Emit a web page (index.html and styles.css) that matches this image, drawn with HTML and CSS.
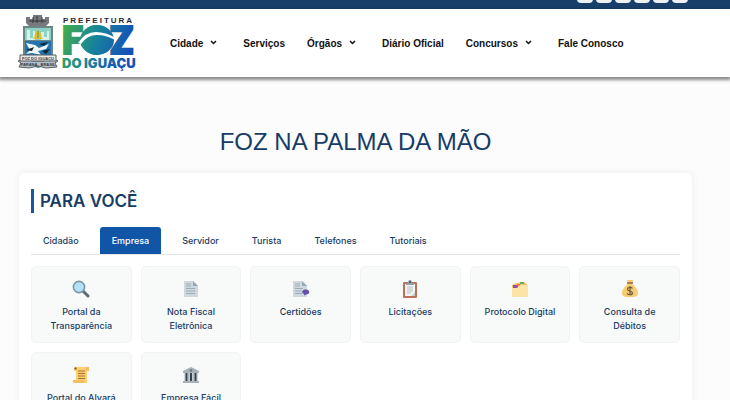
FILE: index.html
```
<!DOCTYPE html>
<html lang="pt-BR">
<head>
  <meta charset="UTF-8" />
  <meta name="viewport" content="width=device-width, initial-scale=1.0" />
  <title>Prefeitura de Foz do Iguaçu</title>
  <link rel="stylesheet" href="styles.css">
</head>
<body>
  <div class="topbar">
    <a href="#" aria-label="Facebook"></a>
    <a href="#" aria-label="Instagram"></a>
    <a href="#" aria-label="YouTube"></a>
    <a href="#" aria-label="Twitter"></a>
    <a href="#" aria-label="Flickr"></a>
    <a href="#" aria-label="WhatsApp"></a>
  </div>

  <header class="header">
    <a class="logo" href="#" aria-label="Prefeitura de Foz do Iguaçu">
      <svg width="120" height="58" viewBox="0 0 120 58">
        <defs>
          <linearGradient id="marca" gradientUnits="userSpaceOnUse" x1="46" y1="12" x2="112" y2="36">
            <stop offset="0" stop-color="#45ad4b" />
            <stop offset="0.5" stop-color="#17849b" />
            <stop offset="1" stop-color="#1550b8" />
          </linearGradient>
        </defs>
        <!-- Brasão -->
        <path d="M9 9V3h4v2h3V1h9v4h3V3h4v6l-3 3H12z" fill="#77797c" />
        <path d="M12 7h17M16 3v6M20 2v7M25 3v6" stroke="#34383c" stroke-width="1" />
        <path d="M6 12h30v28q0 9-15 14Q6 49 6 40z" fill="#6e8586" />
        <path d="M8 14h26v12H8z" fill="#8cd3c4" />
        <path d="M10 26V16h3v8h3v-7h2v9zm14 0v-8h3v5h3v-6h2v9z" fill="#d9f1ed" />
        <path d="M16 25q2-2 2-6 3-5 6 0 0 4 2 6z" fill="#e1bd35" />
        <path d="M20 17h2v7h-2z" fill="#8fae4b" />
        <path d="M8 27h26v14H8z" fill="#2273ae" />
        <path d="M9 29l9 2 4 3 10-4-3 5-8 2 3 4-9-2-6 1 4-4z" fill="#eef6fa" />
        <path d="M9 36l8-3-2 4zm13-6l9-2-4 4zm3 7l8-2-4 5z" fill="#16242d" />
        <path d="M18 46h7l-1 6-3 2-3-2z" fill="#3b93ba" />
        <path d="M1 47l5-2 10 2h10l10-2 5 2-3 2 2 4-11 1-8-2-9 2-10-1 2-4z" fill="#b9bfc2" stroke="#575d61" stroke-width="1" />
        <path d="M3 41h36v6H3z" fill="#e8eaeb" stroke="#575d61" stroke-width="1" />
        <text class="crest-text" x="21" y="46">FOZ DO IGUAÇU</text>
        <text class="crest-text" x="12" y="52">PARANÁ</text>
        <text class="crest-text" x="31" y="52">BRASIL</text>
        <!-- Marca -->
        <text class="logo-top" x="46" y="9">PREFEITURA</text>
        <text class="logo-foz" x="45 66 93" y="40">FOZ</text>
        <ellipse cx="80" cy="26" rx="17" ry="15" fill="url(#marca)" />
        <path d="M61 29q7-11 18-11 10 0 20 6l-1 2q-9-5-18-5-10 0-16 9z" fill="#fff" />
        <text class="logo-city" x="45" y="54">DO IGUAÇU</text>
      </svg>
    </a>
    <nav class="menu">
      <a href="#">Cidade
        <svg class="chevron" width="7" height="5" viewBox="0 0 7 5"><path d="M1 1l2.5 2.5L6 1" /></svg>
      </a>
      <a href="#">Serviços</a>
      <a href="#">Órgãos
        <svg class="chevron" width="7" height="5" viewBox="0 0 7 5"><path d="M1 1l2.5 2.5L6 1" /></svg>
      </a>
      <a href="#">Diário Oficial</a>
      <a href="#">Concursos
        <svg class="chevron" width="7" height="5" viewBox="0 0 7 5"><path d="M1 1l2.5 2.5L6 1" /></svg>
      </a>
      <a href="#">Fale Conosco</a>
    </nav>
  </header>

  <main>
    <h1>FOZ NA PALMA DA MÃO</h1>
    <section class="panel">
      <h2>PARA VOCÊ</h2>
      <div class="tabs">
        <button type="button">Cidadão</button>
        <button type="button" class="active">Empresa</button>
        <button type="button">Servidor</button>
        <button type="button">Turista</button>
        <button type="button">Telefones</button>
        <button type="button">Tutoriais</button>
      </div>

      <div class="cards">
        <a class="card" href="#">
          <svg class="icon" viewBox="0 0 18 18">
            <path d="M11 11l5 5" stroke="#5d6b75" stroke-width="3" stroke-linecap="round" />
            <circle cx="7" cy="7" r="5.6" fill="#b4e1f5" stroke="#7897aa" stroke-width="1.6" />
          </svg>
          <span>Portal da Transparência</span>
        </a>
        <a class="card" href="#">
          <svg class="icon" viewBox="0 0 18 18">
            <path d="M2 1h9l5 5v11H2z" fill="#cfd8dd" />
            <path d="M11 1v5h5z" fill="#96a8b2" />
            <path d="M4 4h5M4 6h5M4 8.5h9M4 11h9M4 13.5h9" stroke="#9cadb7" />
          </svg>
          <span>Nota Fiscal Eletrônica</span>
        </a>
        <a class="card" href="#">
          <svg class="icon" viewBox="0 0 18 18">
            <path d="M1 1h9l5 5v11H1z" fill="#cfd8dd" />
            <path d="M10 1v5h5z" fill="#96a8b2" />
            <path d="M3 4h5M3 6h5M3 8.5h8M3 11h7M3 13.5h7" stroke="#9cadb7" />
            <path d="M13 9.5c5-1 6 5 1 5l-2 1v-1.5c-3-1-2-4 1-4.5z" fill="#6650b0" />
          </svg>
          <span>Certidões</span>
        </a>
        <a class="card" href="#">
          <svg class="icon" viewBox="0 0 18 18">
            <rect x="2" y="2" width="14" height="16" rx="1" fill="#bd7258" />
            <path d="M4 4h10v12H4z" fill="#f4f5f5" />
            <path d="M6 7h6M6 9h6M6 11h6M6 13h4" stroke="#b5bfc6" />
            <path d="M10 16l4-4v4z" fill="#c8d0d5" />
            <path d="M5 5V3h2q0-3 2-3t2 3h2v2z" fill="#8fa0ac" />
            <circle cx="9" cy="2" r="1" fill="#34495a" />
          </svg>
          <span>Licitações</span>
        </a>
        <a class="card" href="#">
          <svg class="icon" viewBox="0 0 18 18">
            <path d="M1 5l4-2 8-1 3 2v5H1z" fill="#f4c66c" />
            <path d="M2 5h5v3H2z" fill="#9550a8" />
            <path d="M6 4h3v2H6z" fill="#ee7753" />
            <path d="M9 2h4v2H9z" fill="#69a765" />
            <path d="M1 8h5l3-3h8v12H1z" fill="#fce3a6" />
          </svg>
          <span>Protocolo Digital</span>
        </a>
        <a class="card" href="#">
          <svg class="icon" viewBox="0 0 18 18">
            <path d="M6 0h6l-1 4c3 2 6 6 6 9 0 4-3 4-8 4s-8 0-8-4c0-3 3-7 6-9z" fill="#f8cc70" />
            <path d="M6 3h6" stroke="#8f6540" stroke-width="1.5" />
            <path d="M11.5 8.5c-1-1.5-5-1.5-5 .7 0 2.5 5 1.3 5 3.8 0 2.3-4.5 2.3-5.5.2M9 6v9" fill="none" stroke="#6a5b43" stroke-width="1.2" />
          </svg>
          <span>Consulta de Débitos</span>
        </a>
        <a class="card" href="#">
          <svg class="icon" viewBox="0 0 18 18">
            <path d="M3 1h14v4h-2v12H2v-3h2V5H2z" fill="#fccf73" />
            <path d="M1 14h11v3H2q-2-1-1-3zM14 1h3v4h-3z" fill="#f3bd60" />
            <path d="M6 5h7M6 7.5h7M6 10h7M6 12.5h7" stroke="#ae6e31" />
            <circle cx="3.5" cy="2.5" r="1.2" fill="#9a6031" />
          </svg>
          <span>Portal do Alvará</span>
        </a>
        <a class="card" href="#">
          <svg class="icon" viewBox="0 0 18 18">
            <path d="M9 1l8 4v2H1V5z" fill="#a7b1b7" />
            <path d="M2 7h14v8H2z" fill="#d1d8dc" />
            <path d="M4.5 7v8M9 7v8M13.5 7v8" stroke="#34434e" stroke-width="2" />
            <path d="M6.8 7v8M11.2 7v8" stroke="#a5b0b7" />
            <path d="M1 15h16v2H1z" fill="#a7b1b7" />
            <circle cx="9" cy="4.5" r="1.2" fill="#65747d" />
          </svg>
          <span>Empresa Fácil</span>
        </a>
      </div>
    </section>
  </main>
</body>
</html>
```

FILE: styles.css
```
* {
  box-sizing: border-box;
}
body {
  margin: 0;
  font-family: Inter, sans-serif;
  background-color: #fcfcfc;
  color: #173c66;
}
a {
  color: inherit;
  text-decoration: none;
}
.topbar {
  height: 9px;
  padding: 0 42px 6px;
  display: flex;
  justify-content: flex-end;
  align-items: flex-end;
  gap: 3px;
  background-color: #173f69;
}
.topbar a {
  flex: none;
  width: 16px;
  height: 16px;
  border-radius: 4px;
  background-color: #eef1f5;
}
.header {
  display: flex;
  align-items: center;
  padding: 5px 17px;
  background-color: white;
  box-shadow: 0 2px 3px 1px rgba(0, 0, 0, 0.45);
}
.logo {
  display: flex;
}
.crest-text {
  font: bold 4px "Liberation Sans", sans-serif;
  text-anchor: middle;
  fill: #34383c;
}
.logo-top {
  font: bold 8px "Liberation Sans", sans-serif;
  letter-spacing: 2px;
  fill: #262a2e;
}
.logo-foz {
  font: 900 38px Roboto, sans-serif;
  fill: url(#marca);
  stroke: url(#marca);
  stroke-width: 2px;
}
.logo-city {
  font: 900 13px Inter, sans-serif;
  fill: url(#marca);
}
.menu {
  display: flex;
  align-items: center;
  gap: 22px;
  margin-left: 33px;
  font: bold 10px "Liberation Sans", Arial, sans-serif;
  color: #111;
}
.menu a {
  display: flex;
  gap: 7px;
  white-space: nowrap;
}
.chevron {
  margin: 2px 4px 0 0;
  fill: none;
  stroke: #111;
  stroke-width: 1.5;
}
main {
  padding: 48px 38px 20px 19px;
}
h1 {
  margin: 0 0 14px;
  font: 24px/34px "Liberation Sans", Arial, sans-serif;
  text-align: center;
}
.panel {
  padding: 16px 12px;
  border-radius: 6px;
  background-color: white;
  box-shadow: 0 0 8px rgba(0, 0, 0, 0.06);
}
h2 {
  margin: 0 0 14px;
  padding-left: 6px;
  border-left: 3px solid #1558a0;
  font-size: 17px;
  font-weight: 600;
  line-height: 24px;
}
.tabs {
  display: flex;
  gap: 9px;
  border-bottom: 1px solid #e3e5e8;
}
.tabs button {
  padding: 0 12px;
  border: none;
  border-radius: 3px 3px 0 0;
  background: none;
  color: inherit;
  font: 500 9px/27px Inter, sans-serif;
  cursor: pointer;
}
.tabs .active {
  background-color: #1156a6;
  color: white;
}
.cards {
  display: grid;
  grid-template-columns: repeat(6, 1fr);
  gap: 9px;
  margin-top: 11px;
}
.card {
  display: flex;
  flex-direction: column;
  align-items: center;
  gap: 7px;
  min-height: 77px;
  padding: 13px 10px 9px;
  border: 1px solid #f2f3f3;
  border-radius: 5px;
  background-color: #f8f9f9;
  font-size: 9px;
  font-weight: 500;
  line-height: 14px;
  text-align: center;
}
.icon {
  width: 18px;
  height: 18px;
}
```
